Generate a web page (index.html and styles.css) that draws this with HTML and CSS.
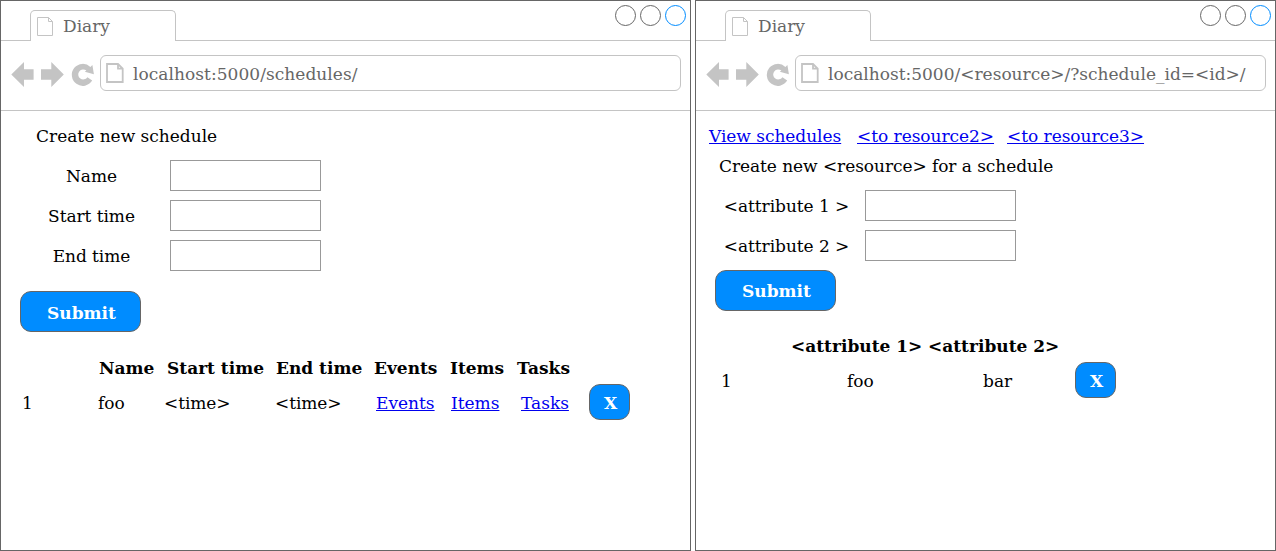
FILE: index.html
```html
<!DOCTYPE html>
<html lang="en">
<head>
<meta charset="utf-8">
<title>Diary</title>
<link rel="stylesheet" href="styles.css">
</head>
<body>
<svg class="defs" aria-hidden="true">
  <symbol id="nav" viewBox="1 41 99 69">
    <path d="M11.3 74.5 24 62v7.2h9.6v10.6H24V87z"/>
    <path d="M63.8 74.5 51.3 62v7.2H41v10.6h10.3V87z"/>
    <path d="M92.4 65 93.9 74.2 84.8 71.8 86.4 70.6A5 5 0 1 0 87.4 77.2L92.2 80.6A11 11 0 1 1 90.4 66.9z"/>
  </symbol>
  <symbol id="page" viewBox="0 0 17 20">
    <path d="M.5.5h11l4 4v14H.5zM11.5.5v4h4"/>
  </symbol>
  <symbol id="page-bold" viewBox="0 0 18 21">
    <path d="M1 1h11l4.7 4.7v13.3H1zM12 1v4.7h4.7"/>
  </symbol>
</svg>
<main class="desktop">
  <section class="window">
    <header class="tabbar">
      <div class="tab"><svg class="tab-icon"><use href="#page"/></svg>Diary</div>
      <div class="controls"><i></i><i></i><i class="active"></i></div>
    </header>
    <div class="toolbar">
      <svg class="nav"><use href="#nav"/></svg>
      <div class="address schedule-address"><svg class="address-icon"><use href="#page-bold"/></svg>localhost:5000/schedules/</div>
    </div>
    <div class="content">
      <div class="title schedule-title">Create new schedule</div>
      <form class="form">
        <label>Name</label><input type="text">
        <label>Start time</label><input type="text">
        <label>End time</label><input type="text">
      </form>
      <button class="button submit schedule-submit">Submit</button>
      <div class="schedule-head"><b>Name</b><b>Start time</b><b>End time</b><b>Events</b><b>Items</b><b>Tasks</b></div>
      <div class="schedule-row"><span>1</span><span>foo</span><span class="time">&lt;time&gt;</span><span class="time">&lt;time&gt;</span><a href="#">Events</a><a href="#">Items</a><a href="#">Tasks</a><button class="button remove">X</button></div>
    </div>
  </section>
  <section class="window">
    <header class="tabbar">
      <div class="tab"><svg class="tab-icon"><use href="#page"/></svg>Diary</div>
      <div class="controls"><i></i><i></i><i class="active"></i></div>
    </header>
    <div class="toolbar">
      <svg class="nav"><use href="#nav"/></svg>
      <div class="address"><svg class="address-icon"><use href="#page-bold"/></svg>localhost:5000/&lt;resource&gt;/?schedule_id=&lt;id&gt;/</div>
    </div>
    <div class="content">
      <nav class="links"><a href="#">View schedules</a><a href="#">&lt;to resource2&gt;</a><a href="#">&lt;to resource3&gt;</a></nav>
      <div class="title resource-title">Create new &lt;resource&gt; for a schedule</div>
      <form class="form">
        <label>&lt;attribute 1 &gt;</label><input type="text">
        <label>&lt;attribute 2 &gt;</label><input type="text">
      </form>
      <button class="button submit resource-submit">Submit</button>
      <div class="resource-head"><b>&lt;attribute 1&gt;</b><b>&lt;attribute 2&gt;</b></div>
      <div class="resource-row"><span>1</span><span>foo</span><span>bar</span><button class="button remove">X</button></div>
    </div>
  </section>
</main>
</body>
</html>
```
FILE: styles.css
```css
* { box-sizing: border-box; }
body {
  margin: 0;
  background: #fff;
  color: #000;
  font: 17px/20px "DejaVu Serif", serif;
  white-space: nowrap;
}
.defs { display: none; }
a { color: #00e; text-decoration: underline; }
.desktop {
  display: grid;
  grid-template-columns: 691px 581px;
  gap: 4px;
  height: 551px;
}
.window { border: 1px solid #666; overflow: hidden; }
.tabbar {
  display: flex;
  justify-content: space-between;
  height: 40px;
  padding: 4px 4px 0 29px;
  border-bottom: 1px solid #c4c4c4;
}
.tab {
  display: flex;
  align-items: center;
  gap: 9px;
  width: 146px;
  height: 31px;
  margin-top: 5px;
  padding-left: 6px;
  border: 1px solid #c4c4c4;
  border-bottom: 0;
  border-radius: 5px 5px 0 0;
  background: #fff;
  color: #666;
}
.tab-icon { width: 17px; height: 20px; margin-top: 2px; fill: none; stroke: #c4c4c4; }
.controls { display: flex; gap: 4px; }
.controls i { width: 21px; height: 21px; border: 1px solid #666; border-radius: 50%; }
.controls .active { border-color: #008cff; }
.toolbar {
  display: flex;
  height: 70px;
  padding-right: 9px;
  border-bottom: 1px solid #c4c4c4;
}
.nav { width: 99px; height: 69px; fill: #c4c4c4; }
.address {
  display: flex;
  flex: 1;
  align-items: center;
  height: 36px;
  margin-top: 14px;
  padding: 2px 0 0 5px;
  gap: 9px;
  border: 1px solid #c4c4c4;
  border-radius: 6px;
  color: #666;
}
.schedule-address { letter-spacing: 0.05px; }
.address-icon { width: 18px; height: 21px; margin-bottom: 1px; fill: none; stroke: #c4c4c4; stroke-width: 1.8; }
.content { padding-top: 15px; }
.title { height: 20px; }
.schedule-title { padding-left: 35px; }
.resource-title { margin-top: 10px; padding-left: 23px; letter-spacing: -0.06px; }
.form {
  display: grid;
  grid-template-columns: 127px 151px;
  grid-auto-rows: 31px;
  row-gap: 9px;
  column-gap: 15px;
  align-items: center;
  margin: 14px 0 0 27px;
}
.form label { text-align: center; letter-spacing: -0.05px; }
.form input { width: 151px; height: 31px; margin: 0; border: 1px solid #999; border-radius: 0; }
.button {
  display: block;
  padding: 0;
  border: 1px solid #666;
  border-radius: 11px;
  background: #008cff;
  color: #fff;
  font: bold 17px/20px "DejaVu Serif", serif;
}
.submit { width: 121px; height: 41px; margin-left: 19px; padding-left: 2px; }
.schedule-submit { margin-top: 20.4px; padding-top: 2px; }
.resource-submit { margin-top: 9px; }
.remove { width: 41px; height: 36px; padding: 2px 0 0 2px; }
.schedule-head {
  display: grid;
  grid-template-columns: 68px 109px 98px 76px 67px 60px;
  margin: 25.6px 0 0 98px;
}
.schedule-row {
  display: grid;
  grid-template-columns: 76px 66px 111px 101px 75px 70px 68px 41px;
  align-items: center;
  margin: 6.4px 0 0 21px;
}
.schedule-row > :not(.remove),
.resource-row > :not(.remove) { padding-top: 2px; }
.time { letter-spacing: -0.1px; }
.resource-head {
  display: grid;
  grid-template-columns: 137px 137px;
  margin: 25px 0 0 95px;
}
.resource-row {
  display: grid;
  grid-template-columns: 126px 136px 92px 41px;
  align-items: center;
  margin: 6.4px 0 0 25px;
}
.links { display: grid; grid-template-columns: 148px 150px 140px; padding-left: 13px; letter-spacing: -0.04px; }
```
